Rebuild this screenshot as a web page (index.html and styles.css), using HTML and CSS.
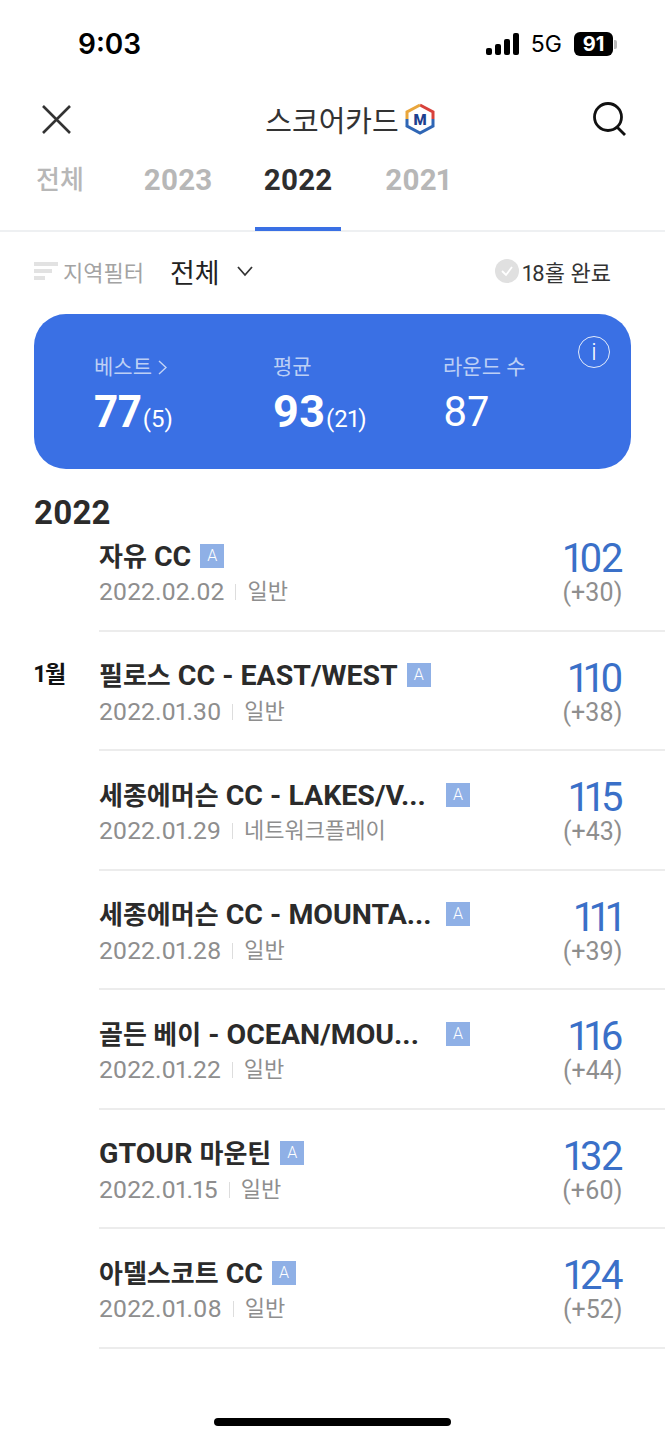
FILE: index.html
```html
<!DOCTYPE html>
<html lang="ko">
<head>
    <meta charset="utf-8">
    <title>스코어카드</title>
    <link rel="stylesheet" href="styles.css">
</head>
<body>
    <div class="status">
        <span class="time">9:03</span>
        <div class="status-right">
            <svg class="signal" width="34" height="22" viewBox="0 0 34 22">
                <rect x="0" y="15" width="6" height="7" rx="2"/>
                <rect x="9" y="11" width="6" height="11" rx="2"/>
                <rect x="18" y="6" width="6" height="16" rx="2"/>
                <rect x="27" y="0" width="6" height="22" rx="2"/>
            </svg>
            <span class="net">5G</span>
            <span class="battery">91</span>
            <span class="battery-tip"></span>
        </div>
    </div>

    <div class="topbar">
        <svg class="icon" width="32" height="32" viewBox="0 0 32 32">
            <path d="M3 3 L30 30 M30 3 L3 30" stroke="#333" stroke-width="2.6" fill="none"/>
        </svg>
        <div class="title">
            <span>스코어카드</span>
            <svg width="30" height="32" viewBox="0 0 30 32">
                <path d="M15 2 L28 9 V16" stroke="#d8413c" stroke-width="3" fill="none"/>
                <path d="M28 16 V23 L15 30 L2 23 V16" stroke="#2f66b5" stroke-width="3" fill="none"/>
                <path d="M2 16 V9 L15 2" stroke="#e9a63c" stroke-width="3" fill="none"/>
                <text x="15" y="21.5" class="logo-m">M</text>
            </svg>
        </div>
        <svg class="icon" width="36" height="36" viewBox="0 0 36 36">
            <circle cx="16" cy="16" r="13.5" stroke="#111" stroke-width="2.8" fill="none"/>
            <path d="M25 26 L33 34" stroke="#111" stroke-width="2.8" fill="none"/>
        </svg>
    </div>

    <div class="tabs">
        <div class="tab tab-all">전체</div>
        <div class="tab">2023</div>
        <div class="tab active">2022</div>
        <div class="tab">2021</div>
    </div>

    <div class="filter">
        <svg width="24" height="20" viewBox="0 0 24 20">
            <rect x="0" y="1" width="24" height="4" fill="#e2e2e2"/>
            <rect x="0" y="8" width="18" height="4" fill="#e2e2e2"/>
            <rect x="0" y="15" width="11" height="4" fill="#e2e2e2"/>
        </svg>
        <span class="filter-label">지역필터</span>
        <span class="filter-value">전체</span>
        <svg width="18" height="12" viewBox="0 0 18 12">
            <path d="M2 2 L9 10 L16 2" stroke="#333" stroke-width="1.8" fill="none"/>
        </svg>
        <div class="holes">
            <svg width="24" height="24" viewBox="0 0 24 24">
                <circle cx="12" cy="12" r="12" fill="#e0e0e0"/>
                <path d="M7 12 L11 16 L17 8" stroke="#fff" stroke-width="1.8" fill="none"/>
            </svg>
            <span>18홀 완료</span>
        </div>
    </div>

    <div class="card">
        <div class="stat stat-best">
            <div class="stat-label">베스트<svg class="chev" width="9" height="15" viewBox="0 0 9 15"><path d="M1 1 L8 7.5 L1 14" stroke="#c2d3f6" stroke-width="1.4" fill="none"/></svg></div>
            <div class="stat-value"><b>77</b><small>(5)</small></div>
        </div>
        <div class="stat stat-avg">
            <div class="stat-label">평균</div>
            <div class="stat-value"><b>93</b><small>(21)</small></div>
        </div>
        <div class="stat">
            <div class="stat-label">라운드 수</div>
            <div class="stat-value">87</div>
        </div>
        <div class="info">i</div>
    </div>

    <h2 class="year">2022</h2>

    <div class="round round-first">
        <div class="month"></div>
        <div class="round-body">
            <div class="round-info">
                <div class="name"><span class="name-text"><span class="ko">자유</span> CC</span><span class="badge">A</span></div>
                <div class="meta"><span>2022.02.02</span><i></i><span class="ko">일반</span></div>
            </div>
            <div class="score"><div class="strokes">102</div><div class="over">(+30)</div></div>
        </div>
    </div>

    <div class="round">
        <div class="month">1월</div>
        <div class="round-body">
            <div class="round-info">
                <div class="name"><span class="name-text"><span class="ko">필로스</span> CC - EAST/WEST</span><span class="badge">A</span></div>
                <div class="meta"><span>2022.01.30</span><i></i><span class="ko">일반</span></div>
            </div>
            <div class="score"><div class="strokes">110</div><div class="over">(+38)</div></div>
        </div>
    </div>

    <div class="round">
        <div class="month"></div>
        <div class="round-body">
            <div class="round-info">
                <div class="name"><span class="name-text long"><span class="ko">세종에머슨</span> CC - LAKES/V...</span><span class="badge">A</span></div>
                <div class="meta"><span>2022.01.29</span><i></i><span class="ko">네트워크플레이</span></div>
            </div>
            <div class="score"><div class="strokes">115</div><div class="over">(+43)</div></div>
        </div>
    </div>

    <div class="round">
        <div class="month"></div>
        <div class="round-body">
            <div class="round-info">
                <div class="name"><span class="name-text long"><span class="ko">세종에머슨</span> CC - MOUNTA...</span><span class="badge">A</span></div>
                <div class="meta"><span>2022.01.28</span><i></i><span class="ko">일반</span></div>
            </div>
            <div class="score"><div class="strokes">111</div><div class="over">(+39)</div></div>
        </div>
    </div>

    <div class="round">
        <div class="month"></div>
        <div class="round-body">
            <div class="round-info">
                <div class="name"><span class="name-text long"><span class="ko">골든 베이</span> - OCEAN/MOU...</span><span class="badge">A</span></div>
                <div class="meta"><span>2022.01.22</span><i></i><span class="ko">일반</span></div>
            </div>
            <div class="score"><div class="strokes">116</div><div class="over">(+44)</div></div>
        </div>
    </div>

    <div class="round">
        <div class="month"></div>
        <div class="round-body">
            <div class="round-info">
                <div class="name"><span class="name-text">GTOUR <span class="ko">마운틴</span></span><span class="badge">A</span></div>
                <div class="meta"><span>2022.01.15</span><i></i><span class="ko">일반</span></div>
            </div>
            <div class="score"><div class="strokes">132</div><div class="over">(+60)</div></div>
        </div>
    </div>

    <div class="round">
        <div class="month"></div>
        <div class="round-body">
            <div class="round-info">
                <div class="name"><span class="name-text"><span class="ko">아델스코트</span> CC</span><span class="badge">A</span></div>
                <div class="meta"><span>2022.01.08</span><i></i><span class="ko">일반</span></div>
            </div>
            <div class="score"><div class="strokes">124</div><div class="over">(+52)</div></div>
        </div>
    </div>

    <div class="home-wrap"><div class="home"></div></div>
</body>
</html>
```

FILE: styles.css
```css
html, body {
    margin: 0;
    padding: 0;
}
body {
    width: 665px;
    height: 1440px;
    overflow: hidden;
    background: #fff;
    color: #2b2b2b;
    font-family: Roboto, "Noto Sans CJK KR", sans-serif;
    font-variant-numeric: proportional-nums;
}

/* status bar */
.status {
    height: 88px;
    box-sizing: border-box;
    padding: 24px 48px 0 78px;
    display: flex;
    justify-content: space-between;
    align-items: flex-start;
}
.time {
    font-family: Inter, sans-serif;
    font-size: 28px;
    line-height: 40px;
    font-weight: 600;
    color: #000;
}
.status-right {
    display: flex;
    align-items: center;
    height: 40px;
}
.signal {
    fill: #000;
    margin-right: 11px;
}
.net {
    font-family: Inter, sans-serif;
    font-size: 23px;
    color: #000;
    margin-right: 12px;
}
.battery {
    width: 39px;
    height: 24px;
    border-radius: 6px;
    background: #000;
    color: #fff;
    font-family: Inter, sans-serif;
    font-size: 20px;
    font-weight: 700;
    line-height: 24px;
    text-align: center;
}
.battery-tip {
    width: 3px;
    height: 9px;
    margin-left: 1px;
    border-radius: 0 2px 2px 0;
    background: #bbb;
}

/* top bar */
.topbar {
    height: 62px;
    box-sizing: border-box;
    padding: 0 37px 0 40px;
    display: flex;
    justify-content: space-between;
    align-items: center;
}
.title {
    display: flex;
    align-items: center;
    gap: 6px;
    margin-left: 36px;
    font-size: 29px;
    font-weight: 400;
    color: #333;
}
.logo-m {
    font-family: Roboto, sans-serif;
    font-size: 15px;
    font-weight: 900;
    fill: #1d3f8f;
    text-anchor: middle;
}

/* tabs */
.tabs {
    height: 82px;
    box-sizing: border-box;
    display: flex;
    border-bottom: 2px solid #eef0f2;
    padding-left: 15px;
    font-size: 29.5px;
    font-weight: 700;
    color: #b7b7b7;
}
.tab {
    width: 86px;
    height: 80px;
    box-sizing: border-box;
    margin-right: 34px;
    padding-top: 11px;
    line-height: 38px;
    text-align: center;
}
.tab-all {
    padding-left: 4px;
    font-size: 26px;
    font-weight: 500;
}
.tab.active {
    color: #2e2e2e;
    border-bottom: 4px solid #3a70e4;
    height: 81px;
}

/* filter row */
.filter {
    height: 78px;
    margin-bottom: 4px;
    box-sizing: border-box;
    padding: 0 54px 0 34px;
    display: flex;
    align-items: center;
}
.filter-label {
    margin-left: 5px;
    font-size: 22px;
    color: #a3a3a3;
}
.filter-value {
    margin-left: 26px;
    margin-right: 16px;
    font-size: 27px;
    color: #222;
}
.holes {
    margin-left: auto;
    display: flex;
    align-items: center;
    gap: 3px;
    font-size: 22px;
    color: #333;
}

/* blue summary card */
.card {
    position: relative;
    margin: 0 34px;
    height: 155px;
    box-sizing: border-box;
    padding: 38px 0 0 60px;
    border-radius: 32px;
    background: #3a70e4;
    color: #fff;
    display: flex;
}
.stat {
    width: 170px;
}
.stat-best {
    width: 179px;
}
.stat-label {
    font-size: 21px;
    line-height: 30px;
    color: #bccff5;
}
.chev {
    margin-left: 6px;
    vertical-align: -1px;
}
.stat-value {
    font-size: 42px;
    line-height: 52px;
    margin-top: 4px;
}
.stat-value b {
    font-size: 45px;
    font-weight: 700;
}
.stat-value small {
    margin-left: 1px;
    font-size: 24px;
}
.info {
    position: absolute;
    top: 22px;
    right: 21px;
    width: 30px;
    height: 30px;
    border: 1px solid #e3ebfb;
    border-radius: 50%;
    text-align: center;
    font-size: 24px;
    line-height: 30px;
    font-weight: 300;
}

/* round list */
.year {
    margin: 26px 0 0 34px;
    font-size: 33px;
    line-height: 36px;
    font-weight: 700;
    color: #2b2b2b;
}
.round {
    height: 119.5px;
    display: flex;
}
.round-first {
    height: 100.5px;
}
.month {
    width: 65px;
    padding-left: 34px;
    padding-top: 27px;
    font-size: 23px;
    line-height: 32px;
    font-weight: 700;
    color: #111;
    flex: none;
}
.round-body {
    flex: 1;
    min-width: 0;
    padding-right: 43px;
    display: flex;
    justify-content: space-between;
    border-bottom: 2px solid #ececec;
}
.round-info {
    padding-top: 26px;
    min-width: 0;
}
.round-first .round-info {
    padding-top: 7px;
}
.name {
    display: flex;
    align-items: center;
    height: 32px;
    font-size: 28.5px;
    font-weight: 700;
    color: #2b2b2b;
}
.name .ko {
    font-size: 26px;
}
.name-text {
    white-space: nowrap;
}
.name-text.long {
    width: 338px;
}
.badge {
    margin: 3px 0 0 9px;
    width: 24px;
    height: 24px;
    background: #8fb0e6;
    color: #fff;
    font-size: 16px;
    font-weight: 300;
    line-height: 24px;
    text-align: center;
}
.meta {
    margin-top: 4px;
    display: flex;
    align-items: center;
    font-size: 24.7px;
    line-height: 36px;
    color: #8e8e8e;
}
.meta .ko {
    font-size: 22px;
}
.meta i {
    width: 1px;
    height: 16px;
    margin: 0 11px;
    background: #ddd;
}
.score {
    padding-top: 26px;
    text-align: right;
}
.round-first .score {
    padding-top: 7px;
}
.strokes {
    font-size: 40px;
    line-height: 41px;
    letter-spacing: -1.5px;
    color: #3a70c8;
}
.over {
    font-size: 25px;
    line-height: 27px;
    margin-right: -0.5px;
    color: #8e8e8e;
}

/* home indicator */
.home-wrap {
    display: flex;
    justify-content: center;
    padding-top: 69px;
}
.home {
    width: 237px;
    height: 8px;
    border-radius: 4px;
    background: #000;
}
```
